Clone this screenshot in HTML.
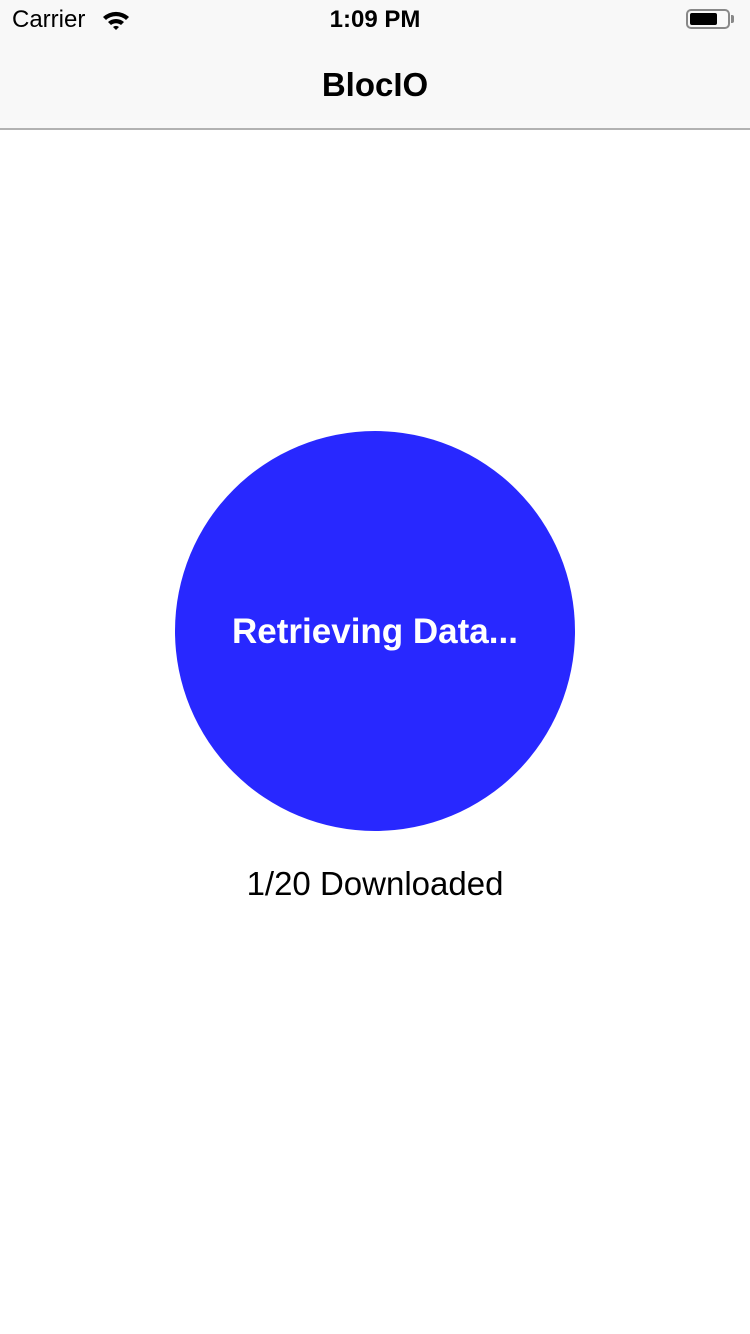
<!DOCTYPE html>
<html><head><meta charset="utf-8"><style>
html,body{margin:0;padding:0;width:750px;height:1334px;background:#fff;overflow:hidden;font-family:"Liberation Sans",sans-serif;}
.bar{position:absolute;left:0;top:0;width:750px;height:128px;background:#f8f8f8;border-bottom:2px solid #b2b2b2;}
.t{position:absolute;color:#000;}
</style></head><body>
<div class="bar"></div>
<div class="t" style="left:12px;top:6px;font-size:24px;">Carrier</div>
<svg style="position:absolute;left:101px;top:9px" width="30" height="22" viewBox="0 0 30 22">
<path d="M2 8 A19 19 0 0 1 28 8 L25 11 A15 15 0 0 0 5 11Z" fill="#000"/>
<path d="M7 13 A12 12 0 0 1 23 13 L20 16 A8 8 0 0 0 10 16Z" fill="#000"/>
<path d="M12 18 A5 5 0 0 1 18 18 L15 21Z" fill="#000"/>
</svg>
<div class="t" style="left:0;width:750px;text-align:center;top:6px;font-size:24px;font-weight:bold;">1:09 PM</div>
<div style="position:absolute;left:686px;top:9px;width:44px;height:20px;border:2px solid #888;border-radius:5px;box-sizing:border-box;"></div>
<div style="position:absolute;left:690px;top:13px;width:27px;height:12px;background:#000;border-radius:2px;"></div>
<div style="position:absolute;left:731px;top:15px;width:3px;height:8px;background:#888;border-radius:0 2px 2px 0;"></div>
<div class="t" style="left:0;width:750px;text-align:center;top:66px;font-size:33px;font-weight:bold;">BlocIO</div>
<div style="position:absolute;left:175px;top:431px;width:400px;height:400px;border-radius:50%;background:#2828ff;"></div>
<div class="t" style="left:0;width:750px;text-align:center;top:612px;font-size:35px;font-weight:bold;color:#fff;">Retrieving Data...</div>
<div class="t" style="left:0;width:750px;text-align:center;top:865px;font-size:33px;">1/20 Downloaded</div>
</body></html>
